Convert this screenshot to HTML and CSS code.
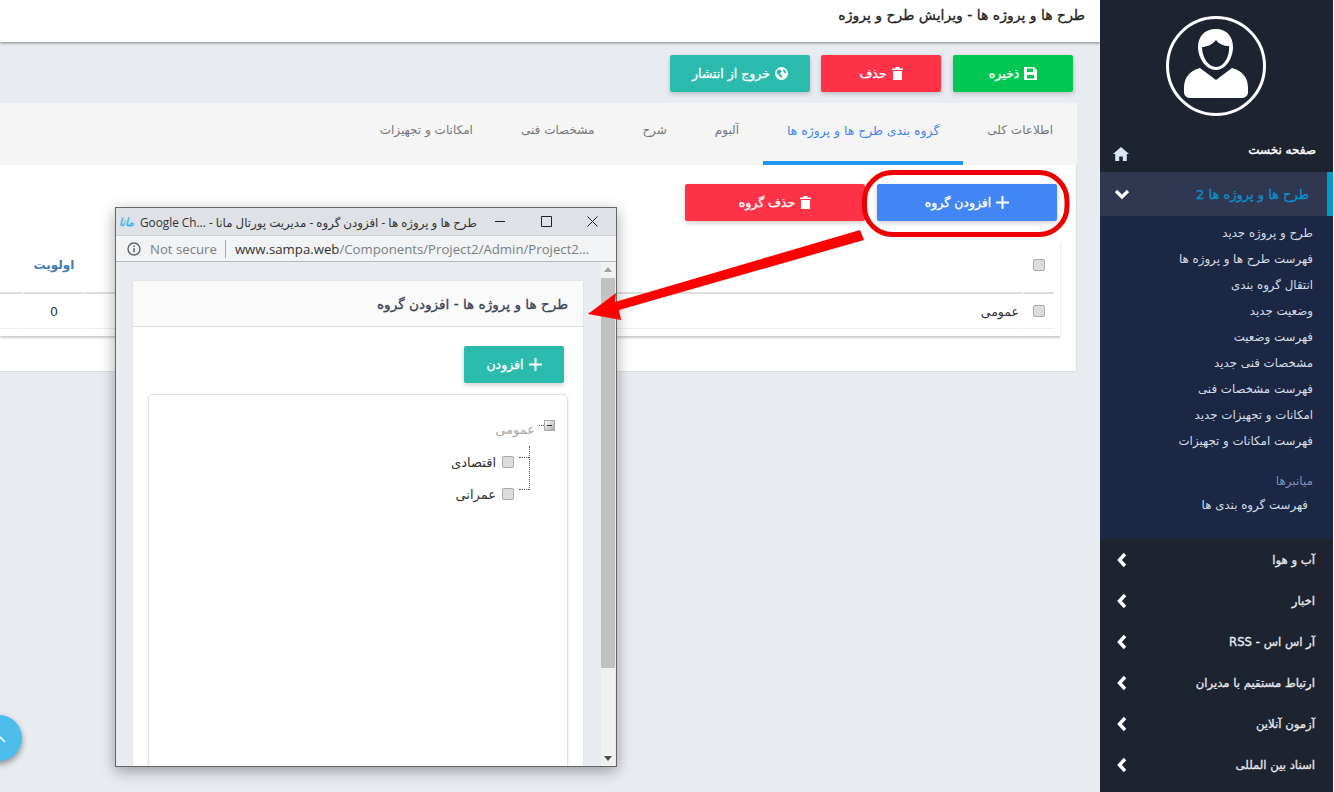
FILE: index.html
```html
<!DOCTYPE html>
<html lang="fa" dir="rtl">
<head>
    <meta charset="UTF-8">
    <title>طرح ها و پروژه ها</title>
    <link rel="stylesheet" href="styles.css">
</head>
<body>
    <aside class="sidebar">
        <div class="avatar">
            <svg width="100" height="100" viewBox="0 0 100 100">
                <circle cx="50" cy="50" r="48.500" fill="none" stroke="#fff" stroke-width="3"/>
                <path d="M50 13C38 13 32 21 32 31 32 42 40 54 50 54 60 54 67 42 67 31 67 21 61 13 50 13zM36 31C40 31 46 29 50 24 53 28 58 30 63 30 64 40 58 51 50 51 42 51 36 41 36 31z" fill="#fff" fill-rule="evenodd"/>
                <path d="M34 52L50 64 66 52C77 55 82 62 82 72V76C82 80 79 82 75 82H25C21 82 18 80 18 76V72C18 62 23 55 34 52z" fill="#fff"/>
            </svg>
        </div>
        <a class="menu-home">
            <span>صفحه نخست</span>
            <svg width="16" height="14" viewBox="0 0 16 14"><path d="M8 0L0 7h2.200v7h4V9.500h3.600V14h4V7H16z" fill="#dbe6f5"/></svg>
        </a>
        <a class="menu-open">
            <span>طرح ها و پروژه ها 2</span>
            <svg width="16" height="10" viewBox="0 0 16 10"><path d="M2 2l6 6 6-6" fill="none" stroke="#fff" stroke-width="3.200"/></svg>
        </a>
        <div class="submenu">
            <a>طرح و پروژه جدید</a>
            <a>فهرست طرح ها و پروژه ها</a>
            <a>انتقال گروه بندی</a>
            <a>وضعیت جدید</a>
            <a>فهرست وضعیت</a>
            <a>مشخصات فنی جدید</a>
            <a>فهرست مشخصات فنی</a>
            <a>امکانات و تجهیزات جدید</a>
            <a>فهرست امکانات و تجهیزات</a>
            <h4>میانبرها</h4>
            <a class="shortcut">فهرست گروه بندی ها</a>
        </div>
        <a class="menu-item"><span>آب و هوا</span><svg width="10" height="16" viewBox="0 0 10 16"><path d="M8 2L2.500 8 8 14" fill="none" stroke="#fff" stroke-width="3.400"/></svg></a>
        <a class="menu-item"><span>اخبار</span><svg width="10" height="16" viewBox="0 0 10 16"><path d="M8 2L2.500 8 8 14" fill="none" stroke="#fff" stroke-width="3.400"/></svg></a>
        <a class="menu-item"><span>آر اس اس - RSS</span><svg width="10" height="16" viewBox="0 0 10 16"><path d="M8 2L2.500 8 8 14" fill="none" stroke="#fff" stroke-width="3.400"/></svg></a>
        <a class="menu-item"><span>ارتباط مستقیم با مدیران</span><svg width="10" height="16" viewBox="0 0 10 16"><path d="M8 2L2.500 8 8 14" fill="none" stroke="#fff" stroke-width="3.400"/></svg></a>
        <a class="menu-item"><span>آزمون آنلاین</span><svg width="10" height="16" viewBox="0 0 10 16"><path d="M8 2L2.500 8 8 14" fill="none" stroke="#fff" stroke-width="3.400"/></svg></a>
        <a class="menu-item"><span>اسناد بین المللی</span><svg width="10" height="16" viewBox="0 0 10 16"><path d="M8 2L2.500 8 8 14" fill="none" stroke="#fff" stroke-width="3.400"/></svg></a>
    </aside>

    <main class="content">
        <header class="topbar">طرح ها و پروژه ها - ویرایش طرح و پروژه</header>

        <div class="toolbar">
            <button class="btn btn-green">
                <svg width="13" height="13" viewBox="0 0 13 13"><path d="M0 0h10l3 3v10H0zM3 1.500V5h6V1.500zM3 8v3.500h7V8z" fill="#fff" fill-rule="evenodd"/></svg>
                ذخیره
            </button>
            <button class="btn btn-red">
                <svg width="11" height="13" viewBox="0 0 11 13"><path d="M0 1.500h3.500V0h4v1.500H11v1.500H0zM1 4h9v9H1z" fill="#fff"/></svg>
                حذف
            </button>
            <button class="btn btn-teal btn-wide">
                <svg width="13" height="13" viewBox="0 0 13 13"><path d="M6.500 0a6.500 6.500 0 100 13 6.500 6.500 0 000-13zM3 2.500l3 .5 1 2-2 1 1 2 1 1v2L5 10 3.500 7.500 1.500 6.500C1.700 4.800 2.200 3.500 3 2.500zM8.500 2l2 1.500 1 3-2-.5-1.500-2z" fill="#fff" fill-rule="evenodd"/></svg>
                خروج از انتشار
            </button>
        </div>

        <section class="panel">
            <nav class="tabs">
                <a>اطلاعات کلی</a>
                <a class="tab-active">گروه بندی طرح ها و پروژه ها</a>
                <a>آلبوم</a>
                <a>شرح</a>
                <a>مشخصات فنی</a>
                <a>امکانات و تجهیزات</a>
            </nav>
            <div class="panel-body">
                <div class="panel-actions">
                    <button class="btn btn-blue btn-group">
                        <svg width="13" height="13" viewBox="0 0 13 13"><path d="M5.500 0h2v5.500H13v2H7.500V13h-2V7.500H0v-2h5.500z" fill="#fff"/></svg>
                        افزودن گروه
                    </button>
                    <button class="btn btn-red btn-group">
                        <svg width="11" height="13" viewBox="0 0 11 13"><path d="M0 1.500h3.500V0h4v1.500H11v1.500H0zM1 4h9v9H1z" fill="#fff"/></svg>
                        حذف گروه
                    </button>
                </div>
                <div class="table-wrap">
                    <table class="groups">
                        <thead>
                            <tr>
                                <th class="col-check"><input type="checkbox"></th>
                                <th></th>
                                <th class="col-mid"></th>
                                <th class="col-prio">اولویت</th>
                                <th class="col-end"></th>
                            </tr>
                        </thead>
                        <tbody>
                            <tr>
                                <td class="col-check"><input type="checkbox"></td>
                                <td>عمومی</td>
                                <td class="col-mid"></td>
                                <td class="col-prio">0</td>
                                <td class="col-end"></td>
                            </tr>
                        </tbody>
                    </table>
                </div>
            </div>
        </section>

        <button class="fab"><svg width="14" height="14" viewBox="0 0 14 14"><path d="M1 11L7 5l6 6" fill="none" stroke="#fff" stroke-width="1.500"/></svg></button>
    </main>

    <div class="popup">
        <div class="popup-title" dir="ltr">
            <span class="popup-name"><b class="popup-logo" dir="rtl">مانا</b><span class="popup-text" dir="rtl">طرح ها و پروژه ها - افزودن گروه - مدیریت پورتال مانا - ...Google Ch</span></span>
            <span class="win-controls">
                <svg width="11" height="11" viewBox="0 0 11 11"><path d="M0 5.500h10" stroke="#222" fill="none"/></svg>
                <svg width="11" height="11" viewBox="0 0 11 11"><path d="M.5.500h10v10H.5z" stroke="#222" fill="none"/></svg>
                <svg width="11" height="11" viewBox="0 0 11 11"><path d="M.5.500l10 10M10.500.500l-10 10" stroke="#222" fill="none"/></svg>
            </span>
        </div>
        <div class="popup-address" dir="ltr">
            <svg width="14" height="14" viewBox="0 0 14 14"><circle cx="7" cy="7" r="6" fill="none" stroke="#5f6368" stroke-width="1.400"/><path d="M7 6v4.200M7 3.500v1.400" stroke="#5f6368" stroke-width="1.500"/></svg>
            <span class="not-secure">Not secure</span>
            <span class="address-url"><b>www.sampa.web</b>/Components/Project2/Admin/Project2...</span>
        </div>
        <div class="popup-page">
            <div class="scrollbar">
                <span class="scroll-up"></span>
                <span class="scroll-thumb"></span>
                <span class="scroll-down"></span>
            </div>
            <div class="card">
                <h3 class="card-head">طرح ها و پروژه ها - افزودن گروه</h3>
                <div class="card-body">
                    <div class="card-actions">
                        <button class="btn btn-teal btn-add">
                            <svg width="13" height="13" viewBox="0 0 13 13"><path d="M5.500 0h2v5.500H13v2H7.500V13h-2V7.500H0v-2h5.500z" fill="#fff"/></svg>
                            افزودن
                        </button>
                    </div>
                    <div class="tree">
                        <div class="tree-root"><span class="tree-toggle"></span><span class="tree-label">عمومی</span></div>
                        <ul class="tree-list">
                            <li><input type="checkbox"><span>اقتصادی</span></li>
                            <li><input type="checkbox"><span>عمرانی</span></li>
                        </ul>
                    </div>
                </div>
            </div>
        </div>
    </div>

    <svg class="markup" width="1334" height="792" viewBox="0 0 1334 792">
        <rect x="864.500" y="172.500" width="202.500" height="62" rx="28" fill="none" stroke="#ee0000" stroke-width="5"/>
        <path d="M588 314L616 293 615 302 860 230 864 240 619 310 621 320z" fill="#ff0000"/>
    </svg>
</body>
</html>
```
FILE: styles.css
```css
* {
    box-sizing: border-box;
}
html, body {
    height: 100%;
}
body {
    margin: 0;
    display: flex;
    overflow: hidden;
    background: #e8ebf0;
    color: #333;
    font-family: "DejaVu Sans", "Noto Sans", sans-serif;
    font-size: 12px;
}
a {
    display: block;
}
button {
    font-family: inherit;
}
input[type="checkbox"] {
    appearance: none;
    width: 12px;
    height: 12px;
    margin: 0;
    flex: none;
    background: #ddd;
    border: 1px solid #aaa;
    border-radius: 2px;
}

/* sidebar */
.sidebar {
    width: 234px;
    flex: none;
    height: 792px;
    background: #1e2330;
    border-right: 1px solid #fff;
    color: #fff;
    overflow: hidden;
}
.avatar {
    display: flex;
    justify-content: center;
    padding: 16px 2px 0 0;
    height: 130px;
}
.menu-home {
    display: flex;
    justify-content: space-between;
    align-items: flex-start;
    height: 42px;
    padding: 13px 17px 0 13px;
    font-size: 12px;
    -webkit-text-stroke: 0.4px;
}
.menu-home svg {
    margin-top: 4px;
}
.menu-open {
    display: flex;
    justify-content: space-between;
    align-items: center;
    height: 44px;
    padding: 0 18px 0 14px;
    background: #2f3850;
    border-right: 6px solid #0099cc;
    color: #0b8fcb;
    font-size: 13px;
    -webkit-text-stroke: 0.3px;
}
.submenu {
    height: 323px;
    padding: 4px 20px 0 0;
    background: #1c2843;
    color: #d5dde8;
    font-size: 11.800px;
}
.submenu a {
    height: 26px;
    line-height: 26px;
}
.submenu h4 {
    margin: 16px 0 0;
    height: 22px;
    line-height: 22px;
    color: #7f90b5;
    font-size: 12px;
    font-weight: normal;
}
.submenu .shortcut {
    margin-right: 5px;
}
.menu-item {
    display: flex;
    justify-content: space-between;
    align-items: center;
    height: 41px;
    padding: 1px 18px 0 17px;
    color: #e6e9ee;
    font-size: 11.700px;
    -webkit-text-stroke: 0.3px;
}

/* main column */
.content {
    width: 1100px;
    flex: none;
    position: relative;
    overflow: hidden;
    height: 792px;
}
.topbar {
    height: 42px;
    padding: 7px 15px 0 0;
    background: #fff;
    box-shadow: 0 1px 3px rgba(0, 0, 0, 0.45);
    color: #222;
    font-size: 14px;
    -webkit-text-stroke: 0.3px;
}
.toolbar {
    display: flex;
    gap: 12px;
    padding: 13px 27px 0 0;
}
.btn {
    display: flex;
    justify-content: center;
    align-items: center;
    gap: 5px;
    width: 120px;
    height: 37px;
    padding: 0;
    border: 0;
    border-radius: 2px;
    color: #fff;
    font-size: 12.500px;
    -webkit-text-stroke: 0.3px;
    box-shadow: 0 2px 5px rgba(0, 0, 0, 0.2);
}
.btn-wide {
    width: 140px;
    margin-right: -1px;
}
.btn-group {
    width: 180px;
}
.btn-add {
    width: 100px;
}
.btn-green {
    background: #00c853;
}
.btn-red {
    background: #ff3348;
}
.btn-teal {
    background: #2bbbad;
}
.btn-blue {
    background: #4285f4;
}
.panel {
    margin: 11px 23px 0 0;
}
.tabs {
    display: flex;
    height: 62px;
    background: #f5f5f5;
}
.tabs a {
    height: 62px;
    padding: 20px 24px 0;
    color: #777;
    font-size: 12px;
    white-space: nowrap;
}
.tabs .tab-active {
    color: #4285f4;
    font-size: 12.400px;
    border-bottom: 4px solid #2196f3;
}
.panel-body {
    height: 207px;
    padding: 19px 19px 0 0;
    background: #fff;
    border-right: 1px solid #ddd;
    border-bottom: 1px solid #ddd;
}
.panel-actions {
    display: flex;
    gap: 12px;
}
.table-wrap {
    width: 1060px;
    height: 96px;
    margin: 19px -3px 0 0;
    padding-right: 5px;
    box-shadow: 0 2px 2px rgba(0, 0, 0, 0.2);
}
.groups {
    width: 1060px;
    table-layout: fixed;
    border-collapse: separate;
    border-spacing: 1px 0;
}
.groups th {
    height: 54px;
    padding: 0 0 3px;
    border-bottom: 2px solid #ddd;
    color: #3d7ab8;
    font-size: 12px;
    font-weight: bold;
}
.groups td {
    height: 35px;
    padding: 0 4px;
    border-bottom: 1px solid #eee;
    font-size: 12.500px;
}
.col-check {
    width: 30px;
    text-align: center;
}
.col-check input {
    display: block;
    margin: auto;
}
.col-mid {
    width: 420px;
}
.col-prio {
    width: 60px;
    text-align: center;
}
.col-end {
    width: 27px;
}
.groups td.col-prio {
    text-align: center;
}
.fab {
    position: absolute;
    left: -24px;
    top: 715px;
    width: 46px;
    height: 46px;
    display: flex;
    justify-content: center;
    align-items: center;
    padding: 0;
    border: 0;
    border-radius: 50%;
    background: #4dbdeb;
    box-shadow: 0 3px 6px rgba(0, 0, 0, 0.4);
}

/* popup window */
.popup {
    position: absolute;
    left: 115px;
    top: 207px;
    width: 502px;
    height: 560px;
    display: flex;
    flex-direction: column;
    background: #e8ebf0;
    border: 1px solid #666;
    box-shadow: 0 4px 14px rgba(0, 0, 0, 0.35);
    overflow: hidden;
}
.popup-title {
    display: flex;
    justify-content: space-between;
    align-items: center;
    height: 27px;
    flex: none;
    padding-left: 3px;
    background: #dee1e6;
    color: #333;
    font-size: 11.800px;
    white-space: nowrap;
}
.popup-name {
    display: flex;
    align-items: center;
    gap: 6px;
    font-family: "Open Sans", "DejaVu Sans", sans-serif;
}
.popup-logo {
    color: #39b6e6;
    font-style: italic;
    font-size: 11px;
}
.win-controls {
    display: flex;
    gap: 35px;
    padding-right: 18px;
}
.popup-address {
    display: flex;
    align-items: center;
    height: 27px;
    flex: none;
    padding-left: 11px;
    background: #f1f3f4;
    border-top: 1px solid #cdd0d4;
    border-bottom: 1px solid #b5b7ba;
    color: #7a7f85;
    font-family: "Open Sans", sans-serif;
    font-size: 13.200px;
    white-space: nowrap;
}
.not-secure {
    margin-left: 9px;
    padding-right: 8px;
    border-right: 1px solid #aaa;
}
.address-url {
    margin-left: 9px;
}
.address-url b {
    color: #333;
    font-weight: normal;
}
.popup-page {
    position: relative;
    flex: 1;
    padding: 18px 32px 0 16px;
    overflow: hidden;
}
.scrollbar {
    position: absolute;
    left: 485px;
    top: 0;
    width: 14px;
    height: 100%;
    display: flex;
    flex-direction: column;
    background: #f1f1f1;
}
.scroll-thumb {
    height: 390px;
    background: #c1c1c1;
}
.scroll-up, .scroll-down {
    border: 4px solid transparent;
}
.scroll-up {
    height: 0;
    margin: 5px auto 6px;
    border-bottom: 5px solid #a0a0a0;
    border-top: 0;
}
.scroll-down {
    height: 0;
    margin: auto auto 5px;
    border-top: 5px solid #505050;
    border-bottom: 0;
}
.card {
    height: 600px;
    background: #fff;
    border: 1px solid #e4e4e4;
    border-radius: 3px;
}
.card-head {
    height: 46px;
    margin: 0;
    padding: 0 15px;
    line-height: 46px;
    background: #fafafa;
    border-bottom: 1px solid #ddd;
    color: #3a4256;
    font-size: 13.600px;
    font-weight: normal;
    -webkit-text-stroke: 0.3px;
}
.card-body {
    padding: 19px 15px;
}
.card-actions {
    display: flex;
    padding-right: 4px;
    margin-bottom: 11px;
}
.tree {
    height: 500px;
    padding: 25px 12px 0 0;
    border: 1px solid #e0e0e0;
    border-radius: 5px;
    box-shadow: 0 1px 3px rgba(0, 0, 0, 0.1);
}
.tree-root {
    display: flex;
    height: 26px;
    gap: 9px;
    color: #aaa;
    font-size: 13px;
}
.tree-label {
    margin-top: 2px;
}
.tree-toggle {
    position: relative;
    width: 11px;
    height: 11px;
    flex: none;
    background: linear-gradient(135deg, #fff, #aaa);
    border: 1px solid #aaa;
}
.tree-toggle::before {
    content: "";
    position: absolute;
    left: 2px;
    top: 4px;
    width: 5px;
    border-top: 1px solid #333;
}
.tree-toggle::after {
    content: "";
    position: absolute;
    left: -6px;
    top: 4px;
    width: 5px;
    border-top: 1px dotted #555;
}
.tree-list {
    width: 110px;
    height: 44px;
    margin: 0 25px 0 0;
    padding: 0;
    border-right: 1px dotted #555;
    list-style: none;
    color: #333;
    font-size: 13px;
}
.tree-list li {
    display: flex;
    align-items: center;
    gap: 6px;
    height: 32px;
    white-space: nowrap;
}
.tree-list li::before {
    content: "";
    width: 10px;
    margin: -10px 0 0 -1px;
    border-top: 1px dotted #555;
}

/* arrow and frame drawn over the screenshot */
.markup {
    position: absolute;
    left: 0;
    top: 0;
    pointer-events: none;
}
```
